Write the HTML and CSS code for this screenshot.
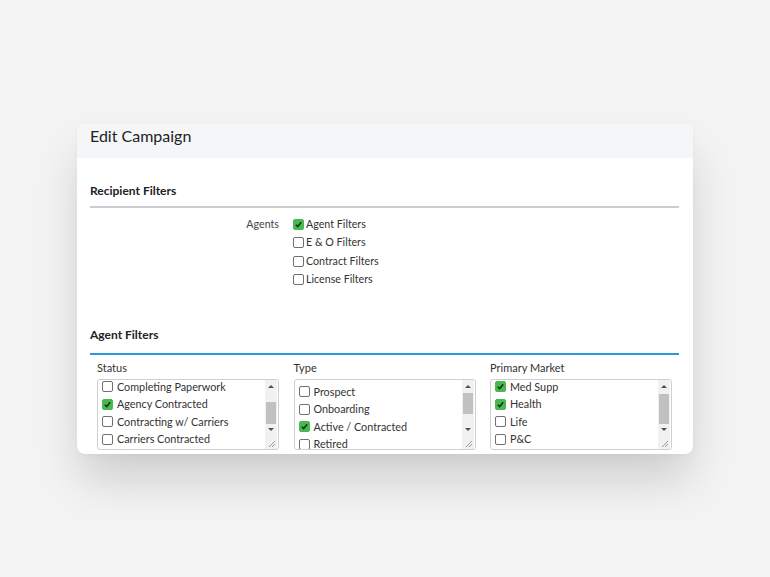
FILE: index.html
```html
<!DOCTYPE html>
<html>
<head>
<meta charset="utf-8">
<link rel="stylesheet" href="styles.css">
</head>
<body>
<div class="page">
  <div class="card">
    <div class="card-header">Edit Campaign</div>
    <div class="card-body">
      <div class="section-title gray">Recipient Filters</div>
      <div class="agents-row">
        <div class="row-label">Agents</div>
        <div class="checks">
          <label class="check"><span class="cb on"><svg viewBox="0 0 10 10"><path d="M2 5.2 L4.1 7.3 L8 2.6" fill="none" stroke="#1d2b1d" stroke-width="1.7"/></svg></span>Agent Filters</label>
          <label class="check"><span class="cb"></span>E &amp; O Filters</label>
          <label class="check"><span class="cb"></span>Contract Filters</label>
          <label class="check"><span class="cb"></span>License Filters</label>
        </div>
      </div>
      <div class="section-title blue">Agent Filters</div>
      <div class="filter-grid">
        <div class="filter">
          <div class="filter-label">Status</div>
          <div class="box">
            <div class="items shifted">
              <div class="item"><span class="cb"></span>Completing Paperwork</div>
              <div class="item"><span class="cb on"><svg viewBox="0 0 10 10"><path d="M2 5.2 L4.1 7.3 L8 2.6" fill="none" stroke="#1d2b1d" stroke-width="1.7"/></svg></span>Agency Contracted</div>
              <div class="item"><span class="cb"></span>Contracting w/ Carriers</div>
              <div class="item"><span class="cb"></span>Carriers Contracted</div>
            </div>
            <div class="sb">
              <div class="arrow up"></div>
              <div class="track"><div class="thumb t-status"></div></div>
              <div class="arrow down"></div>
              <div class="corner"><svg viewBox="0 0 12 13"><path d="M4 11 L10 5 M7 11 L10 8" stroke="#9a9a9a" stroke-width="1"/></svg></div>
            </div>
          </div>
        </div>
        <div class="filter">
          <div class="filter-label">Type</div>
          <div class="box">
            <div class="items top">
              <div class="item"><span class="cb"></span>Prospect</div>
              <div class="item"><span class="cb"></span>Onboarding</div>
              <div class="item"><span class="cb on"><svg viewBox="0 0 10 10"><path d="M2 5.2 L4.1 7.3 L8 2.6" fill="none" stroke="#1d2b1d" stroke-width="1.7"/></svg></span>Active / Contracted</div>
              <div class="item"><span class="cb"></span>Retired</div>
            </div>
            <div class="sb">
              <div class="arrow up"></div>
              <div class="track"><div class="thumb t-type"></div></div>
              <div class="arrow down"></div>
              <div class="corner"><svg viewBox="0 0 12 13"><path d="M4 11 L10 5 M7 11 L10 8" stroke="#9a9a9a" stroke-width="1"/></svg></div>
            </div>
          </div>
        </div>
        <div class="filter">
          <div class="filter-label">Primary Market</div>
          <div class="box">
            <div class="items shifted">
              <div class="item"><span class="cb on"><svg viewBox="0 0 10 10"><path d="M2 5.2 L4.1 7.3 L8 2.6" fill="none" stroke="#1d2b1d" stroke-width="1.7"/></svg></span>Med Supp</div>
              <div class="item"><span class="cb on"><svg viewBox="0 0 10 10"><path d="M2 5.2 L4.1 7.3 L8 2.6" fill="none" stroke="#1d2b1d" stroke-width="1.7"/></svg></span>Health</div>
              <div class="item"><span class="cb"></span>Life</div>
              <div class="item"><span class="cb"></span>P&amp;C</div>
            </div>
            <div class="sb">
              <div class="arrow up"></div>
              <div class="track"><div class="thumb t-market"></div></div>
              <div class="arrow down"></div>
              <div class="corner"><svg viewBox="0 0 12 13"><path d="M4 11 L10 5 M7 11 L10 8" stroke="#9a9a9a" stroke-width="1"/></svg></div>
            </div>
          </div>
        </div>
      </div>
    </div>
  </div>
</div>
</body>
</html>
```
FILE: styles.css
```css
html, body {
  margin: 0;
  padding: 0;
  background: #f3f3f3;
  font-family: Lato, "Liberation Sans", sans-serif;
  color: #333;
}
.page {
  padding: 124px 0 124px 77px;
  min-height: 577px;
  box-sizing: border-box;
}
.card {
  width: 616px;
  background: #fff;
  border-radius: 8px;
  overflow: hidden;
  box-shadow: 0 28px 45px -4px rgba(0, 0, 0, 0.16), 0 2px 6px rgba(0, 0, 0, 0.03);
}
.card-header {
  height: 34px;
  box-sizing: border-box;
  background: #f5f6f8;
  padding: 1px 13px 0;
  font-size: 16px;
  line-height: 21px;
  color: #222;
}
.card-body {
  padding: 25px 14px 4px 13px;
}
.section-title {
  font-size: 12px;
  font-weight: bold;
  line-height: 15px;
  color: #222;
}
.section-title.gray {
  padding-bottom: 8px;
  border-bottom: 2px solid #c9ced3;
}
.section-title.blue {
  margin-top: 38px;
  padding-bottom: 11px;
  border-bottom: 2px solid #2a98dc;
}
.agents-row {
  display: grid;
  grid-template-columns: 189px auto;
  column-gap: 14px;
  margin-top: 7px;
  font-size: 10.7px;
  line-height: 18.4px;
}
.row-label {
  text-align: right;
  color: #444;
}
.checks {
  display: flex;
  flex-direction: column;
}
.check {
  display: flex;
  align-items: center;
  gap: 2px;
  color: #333;
}
.cb {
  display: inline-flex;
  width: 9px;
  height: 9px;
  border: 1px solid #707070;
  border-radius: 2px;
  background: #fff;
  flex: none;
}
.cb.on {
  background: #47b94f;
  border-color: #47b94f;
}
.cb svg {
  width: 9px;
  height: 9px;
}
.filter-grid {
  display: grid;
  grid-template-columns: repeat(3, 182px);
  column-gap: 14.5px;
  padding-left: 7px;
  margin-top: 6px;
}
.filter-label {
  font-size: 11px;
  line-height: 14px;
  color: #333;
  margin-bottom: 4px;
}
.box {
  height: 71px;
  box-sizing: border-box;
  border: 1px solid #cfcfcf;
  border-radius: 3px;
  display: flex;
  overflow: hidden;
}
.items {
  flex: 1;
  padding-left: 4px;
  font-size: 10.8px;
  line-height: 17.6px;
}
.items.shifted {
  margin-top: -2px;
}
.items.top {
  margin-top: 3px;
}
.item {
  display: flex;
  align-items: center;
  gap: 4px;
  white-space: nowrap;
  color: #333;
}
.sb {
  width: 12px;
  background: #f1f1f1;
  display: flex;
  flex-direction: column;
  margin-right: 1px;
}
.arrow {
  height: 13px;
  display: flex;
  align-items: center;
  justify-content: center;
}
.arrow.down {
  height: 12px;
}
.arrow.up::before {
  content: "";
  border-left: 3px solid transparent;
  border-right: 3px solid transparent;
  border-bottom: 3px solid #505050;
}
.arrow.down::before {
  content: "";
  border-left: 3px solid transparent;
  border-right: 3px solid transparent;
  border-top: 3px solid #505050;
}
.track {
  flex: 1;
  display: flex;
  flex-direction: column;
  padding: 0 1px;
}
.thumb {
  background: #c1c1c1;
}
.t-status {
  margin-top: 9px;
  height: 22px;
}
.t-type {
  margin-top: 0;
  height: 21px;
}
.t-market {
  margin-top: 1px;
  height: 30px;
}
.corner {
  height: 13px;
  display: flex;
}
.corner svg {
  width: 12px;
  height: 13px;
}
```
